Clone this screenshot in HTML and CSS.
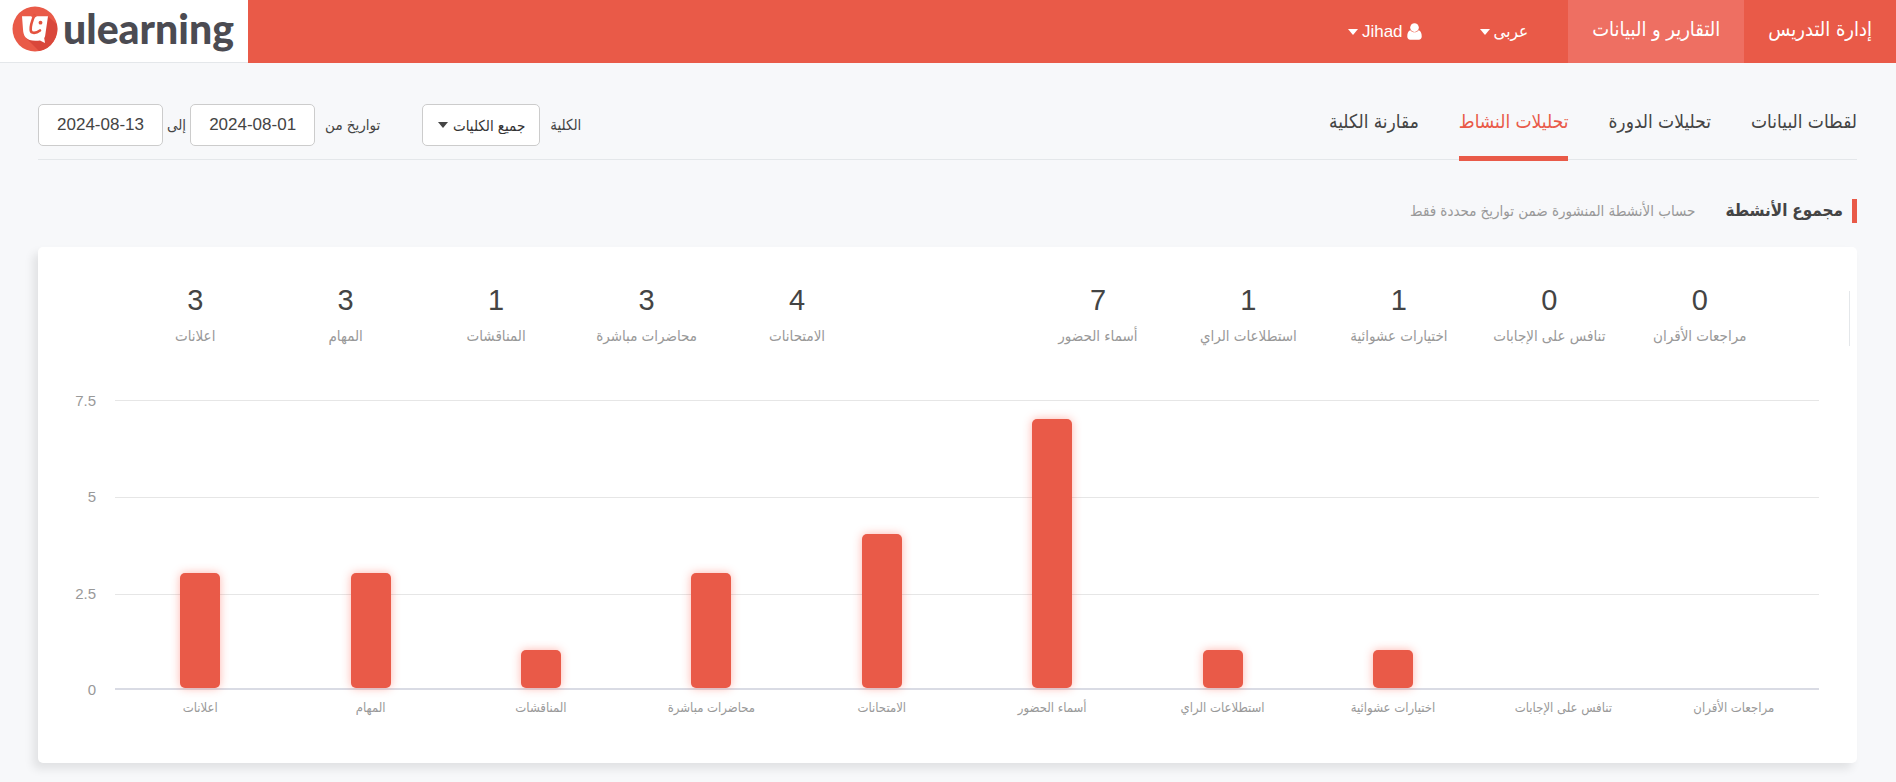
FILE: index.html
```html
<!DOCTYPE html>
<html lang="ar" dir="rtl">
<head>
<meta charset="utf-8">
<meta name="viewport" content="width=device-width, initial-scale=1">
<title>ulearning</title>
<link rel="stylesheet" href="styles.css">
</head>
<body>
<header class="topbar">
  <nav class="topnav">
    <a class="topnav-link" href="#">إدارة التدريس</a>
    <a class="topnav-link is-active" href="#">التقارير و البيانات</a>
    <button class="topnav-menu" type="button">عربى <span class="caret"></span></button>
    <button class="topnav-menu user" type="button">
      <svg class="user-icon" viewBox="0 0 16 18" aria-hidden="true"><circle cx="8" cy="4.800" r="4.600"/><path d="M3.600 7.600C1.200 8.200.3 10.800.3 14.400.3 16.600 1.600 17.800 3.400 17.800h9.200c1.800 0 3.100-1.200 3.100-3.400 0-3.600-.9-6.200-3.300-6.800C11.200 9.100 9.700 9.800 8 9.800S4.800 9.100 3.600 7.600z"/></svg>
      <span>Jihad</span> <span class="caret"></span>
    </button>
  </nav>
  <a class="logo" href="#" dir="ltr">
    <svg class="logo-mark" viewBox="0 0 46 46" aria-hidden="true">
      <circle cx="23" cy="23" r="22.500" fill="#e95a48"/>
      <path d="M36 10.500 44.700 18A22.500 22.500 0 0 1 27 45.100L14 32z" fill="#d9473b"/>
      <path d="M10 10.300h26L33.200 29.500c-.2 1.300-.5 2-1 2.600l.8 4.900-5-2.600c-1.300.3-2.700.4-4.500.4-4.500 0-8-1-10-3.500-1.600-2-2.300-4.500-2.500-8z" fill="#fff"/>
      <path d="M22.500 9C19.500 16 18.300 21 18.700 24.200c.4 3.800 5.500 3.300 9.300.3" fill="none" stroke="#e4523f" stroke-width="2.600" stroke-linecap="round"/>
      <path d="M19 9.500h6.500l-2 1.800-3.500.2z" fill="#e95a48"/>
      <circle cx="28.500" cy="16.700" r="1.900" fill="#e4523f"/>
    </svg>
    <span class="logo-text">ulearning</span>
  </a>
</header>

<main class="page">
  <div class="toolbar">
    <nav class="tabs">
      <a class="tab" href="#">لقطات البيانات</a>
      <a class="tab" href="#">تحليلات الدورة</a>
      <a class="tab is-active" href="#">تحليلات النشاط</a>
      <a class="tab" href="#">مقارنة الكلية</a>
    </nav>
    <form class="filters">
      <label for="college">الكلية</label>
      <span class="select-wrap">
        <select id="college" class="field select"><option>جميع الكليات</option></select>
        <span class="caret"></span>
      </span>
      <label class="from-label" for="from">تواريخ من</label>
      <input id="from" class="field date" type="text" dir="ltr" value="2024-08-01">
      <label class="to-label" for="to">إلى</label>
      <input id="to" class="field date" type="text" dir="ltr" value="2024-08-13">
    </form>
  </div>

  <div class="heading">
    <h1 class="heading-title">مجموع الأنشطة</h1>
    <p class="heading-note">حساب الأنشطة المنشورة ضمن تواريخ محددة فقط</p>
  </div>

  <section class="card" dir="ltr">
    <div class="stats">
      <div class="stat"><b>3</b><span dir="rtl">اعلانات</span></div>
      <div class="stat"><b>3</b><span dir="rtl">المهام</span></div>
      <div class="stat"><b>1</b><span dir="rtl">المناقشات</span></div>
      <div class="stat"><b>3</b><span dir="rtl">محاضرات مباشرة</span></div>
      <div class="stat"><b>4</b><span dir="rtl">الامتحانات</span></div>
      <div class="stat"></div>
      <div class="stat"><b>7</b><span dir="rtl">أسماء الحضور</span></div>
      <div class="stat"><b>1</b><span dir="rtl">استطلاعات الراي</span></div>
      <div class="stat"><b>1</b><span dir="rtl">اختيارات عشوائية</span></div>
      <div class="stat"><b>0</b><span dir="rtl">تنافس على الإجابات</span></div>
      <div class="stat"><b>0</b><span dir="rtl">مراجعات الأقران</span></div>
    </div>
    <div class="chart">
      <div class="axis"><span>7.5</span><span>5</span><span>2.5</span><span>0</span></div>
      <div class="plot">
        <div class="bar-slot"><div class="bar" style="height:40%"></div></div>
        <div class="bar-slot"><div class="bar" style="height:40%"></div></div>
        <div class="bar-slot"><div class="bar" style="height:13.333%"></div></div>
        <div class="bar-slot"><div class="bar" style="height:40%"></div></div>
        <div class="bar-slot"><div class="bar" style="height:53.333%"></div></div>
        <div class="bar-slot"><div class="bar" style="height:93.333%"></div></div>
        <div class="bar-slot"><div class="bar" style="height:13.333%"></div></div>
        <div class="bar-slot"><div class="bar" style="height:13.333%"></div></div>
        <div class="bar-slot"></div>
        <div class="bar-slot"></div>
      </div>
      <div class="categories">
        <span dir="rtl">اعلانات</span>
        <span dir="rtl">المهام</span>
        <span dir="rtl">المناقشات</span>
        <span dir="rtl">محاضرات مباشرة</span>
        <span dir="rtl">الامتحانات</span>
        <span dir="rtl">أسماء الحضور</span>
        <span dir="rtl">استطلاعات الراي</span>
        <span dir="rtl">اختيارات عشوائية</span>
        <span dir="rtl">تنافس على الإجابات</span>
        <span dir="rtl">مراجعات الأقران</span>
      </div>
    </div>
  </section>
</main>
</body>
</html>
```
FILE: styles.css
```css
* {
  box-sizing: border-box;
}

body {
  margin: 0;
  background: #f7f8fa;
  color: #444;
  font-family: "Liberation Sans", "DejaVu Sans Condensed", "DejaVu Sans", sans-serif;
  font-size: 15px;
}

a {
  color: inherit;
  text-decoration: none;
}

button,
input,
select {
  font: inherit;
  color: inherit;
}

.caret {
  display: inline-block;
  border: 5px solid transparent;
  border-top: 6px solid currentColor;
  border-bottom: 0;
}

/* Top bar */
.topbar {
  display: flex;
  justify-content: space-between;
  height: 63px;
  background: #e95a48;
  color: #fff;
}

.topnav {
  display: flex;
}

.topnav-link {
  display: flex;
  align-items: center;
  padding: 0 24px 6px;
  font-size: 20px;
}

.topnav-link.is-active {
  background: #ee6f62;
}

.topnav-menu {
  display: flex;
  align-items: center;
  gap: 4px;
  margin-inline-start: 40px;
  padding: 0;
  border: 0;
  background: none;
  font-size: 17px;
}

.topnav-menu.user {
  margin-inline-start: 58px;
}

.user-icon {
  width: 15px;
  height: 17px;
  fill: #fff;
}

.logo {
  display: flex;
  align-items: center;
  gap: 5px;
  width: 248px;
  padding-left: 12px;
  padding-bottom: 4px;
  border-bottom: 1px solid #e4e7ea;
  background: #fff;
}

.logo-mark {
  flex: none;
  width: 46px;
  height: 46px;
}

.logo-text {
  color: #4b4b52;
  font-family: Lato, sans-serif;
  font-size: 41px;
  font-weight: 900;
  line-height: 48px;
}

/* Toolbar */
.page {
  padding: 31px 39px 19px 38px;
}

.toolbar {
  display: flex;
  justify-content: space-between;
  border-bottom: 1px solid #e4e7ea;
}

.tabs {
  display: flex;
  gap: 40px;
}

.tab {
  margin-bottom: -2px;
  padding-top: 16px;
  border-bottom: 5px solid transparent;
  font-size: 19px;
  line-height: 24px;
}

.tab.is-active {
  border-color: #e95a48;
  color: #e95a48;
}

.filters {
  display: flex;
  align-items: center;
  padding: 10px 0 13px;
}

.field {
  height: 42px;
  border: 1px solid #ccc;
  border-radius: 5px;
  background: #fff;
}

.date {
  width: 125px;
  padding: 0;
  font-size: 17px;
  text-align: center;
}

.select-wrap {
  position: relative;
  margin-inline-start: 10px;
}

.select {
  width: 118px;
  padding: 0 14px;
  appearance: none;
  color: #333;
}

.select-wrap .caret {
  position: absolute;
  left: 16px;
  top: 18px;
  pointer-events: none;
}

.from-label {
  margin-inline: 42px 10px;
}

.to-label {
  margin-inline: 4px;
}

/* Section heading */
.heading {
  display: flex;
  align-items: center;
  gap: 30px;
  margin: 39px 0 24px;
}

.heading-title {
  margin: 0;
  padding-inline-start: 9px;
  border-inline-start: 5px solid #e95a48;
  font-size: 17px;
  line-height: 24px;
}

.heading-note {
  margin: 0;
  color: #999;
}

/* Card */
.card {
  padding: 35px 7px 45px 38px;
  border-radius: 5px;
  background: #fff;
  box-shadow: -5px 6px 10px rgba(0, 0, 0, 0.09);
}

.stats {
  display: grid;
  grid-template-columns: repeat(11, 1fr);
  height: 64px;
  padding: 0 75px 0 44px;
  background: linear-gradient(#e4e7ea, #e4e7ea) right bottom / 1px 55px no-repeat;
}

.stat {
  display: flex;
  flex-direction: column;
  align-items: center;
  white-space: nowrap;
}

.stat b {
  font-size: 29px;
  font-weight: 400;
  line-height: 36px;
}

.stat span {
  color: #999;
  font-size: 15px;
  line-height: 36px;
}

.chart {
  display: grid;
  grid-template-columns: 20px 1fr;
  column-gap: 19px;
  margin-top: 54px;
  padding-right: 31px;
}

.axis {
  display: flex;
  flex-direction: column;
  justify-content: space-between;
  align-items: flex-end;
  margin: -9px 0 -10px;
  color: #999;
  font-size: 15px;
  line-height: 20px;
}

.plot {
  display: grid;
  grid-template-columns: repeat(10, 1fr);
  height: 290px;
  border-bottom: 2px solid #d9dbe4;
  background: repeating-linear-gradient(#e6e6e6 0 1px, transparent 1px 97px);
}

.bar-slot {
  display: flex;
  align-items: flex-end;
  justify-content: center;
}

.bar {
  width: 40px;
  border-radius: 5px;
  background: #e95a48;
  box-shadow: 0 0 10px rgba(255, 70, 50, 0.4);
}

.categories {
  display: grid;
  grid-template-columns: repeat(10, 1fr);
  grid-column: 2;
  margin-top: 8px;
  color: #999;
  font-size: 13px;
  line-height: 20px;
  text-align: center;
  white-space: nowrap;
}
```
